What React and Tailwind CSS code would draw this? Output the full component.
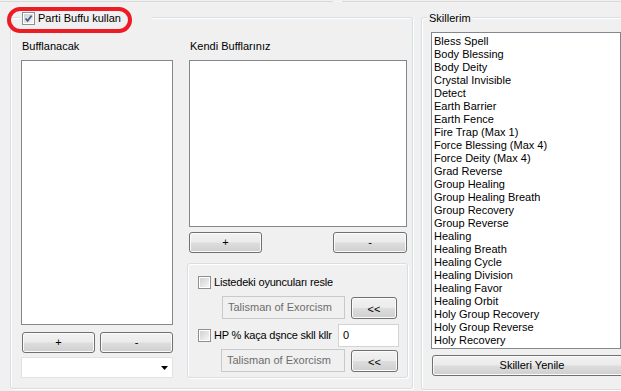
import React from "react";

const Btn = ({ className = "", children }) => (
  <div
    className={
      "flex items-center justify-center border border-[#707070] rounded-[3px] bg-[linear-gradient(#f2f2f2_0%,#ebebeb_48%,#dddddd_52%,#cfcfcf_100%)] shadow-[inset_0_0_0_1px_#fbfbfb] text-black shrink-0 " +
      className
    }
  >
    {children}
  </div>
);

const Check = ({ checked }) => (
  <div className="w-[13px] h-[13px] border border-[#8e8f8f] bg-white p-px shrink-0">
    <div className="w-full h-full bg-[linear-gradient(135deg,#cfd1d4,#f5f5f5)] flex items-center justify-center">
      {checked && (
        <svg width="9" height="9" viewBox="0 0 9 9">
          <path d="M1.5 4.5 L3.6 6.8 L7.6 1.6" fill="none" stroke="#4a5e8c" strokeWidth="1.8" />
        </svg>
      )}
    </div>
  </div>
);

const ListBox = ({ className = "", children }) => (
  <div className={"border border-[#828790] bg-white overflow-hidden shrink-0 " + className}>{children}</div>
);

const skills = [
  "Bless Spell",
  "Body Blessing",
  "Body Deity",
  "Crystal Invisible",
  "Detect",
  "Earth Barrier",
  "Earth Fence",
  "Fire Trap (Max 1)",
  "Force Blessing (Max 4)",
  "Force Deity (Max 4)",
  "Grad Reverse",
  "Group Healing",
  "Group Healing Breath",
  "Group Recovery",
  "Group Reverse",
  "Healing",
  "Healing Breath",
  "Healing Cycle",
  "Healing Division",
  "Healing Favor",
  "Healing Orbit",
  "Holy Group Recovery",
  "Holy Group Reverse",
  "Holy Recovery",
];

export default function App() {
  return (
    <div className="w-[621px] h-[391px] bg-[#f0f0f0] relative overflow-hidden text-[11px] leading-[13px] text-black font-['Liberation_Sans',Arial,sans-serif]">
      {/* top tab edge */}
      <div className="mt-px h-px bg-[#d9d9d9] flex">
        <div className="ml-[333px] w-[9px] bg-[#f7f7f7]" />
      </div>

      <div className="flex pl-[10px] pt-[15px]">
        {/* Left group */}
        <div className="relative shrink-0 w-[403px] h-[372px] border border-[#d5dfe5] rounded-[3px] shadow-[inset_1px_1px_0_#ffffff,1px_1px_0_#ffffff]">
          <div className="absolute left-[9px] -top-[7px] w-[132px] h-[14px] bg-[#f0f0f0] flex items-center pl-[2px] gap-[3px]">
            <Check checked />
            <span className="whitespace-nowrap">Parti Buffu kullan</span>
          </div>

          <div className="flex pl-[10px] pt-[22px]">
            {/* column 1 */}
            <div className="w-[152px] shrink-0 flex flex-col">
              <div className="h-[20px] pl-px">Bufflanacak</div>
              <ListBox className="h-[265px]" />
              <div className="flex justify-between pl-px mt-[7px]">
                <Btn className="w-[73px] h-[21px]">+</Btn>
                <Btn className="w-[73px] h-[21px]">-</Btn>
              </div>
              <div className="mt-[4px] h-[21px] border border-[#e2e2e2] bg-white flex items-center justify-end pr-[4px]">
                <svg width="7" height="4" viewBox="0 0 7 4">
                  <path d="M0 0 H7 L3.5 4 Z" fill="#000" />
                </svg>
              </div>
            </div>

            {/* column 2 */}
            <div className="ml-[16px] w-[218px] shrink-0 flex flex-col">
              <div className="h-[20px] pl-px">Kendi Bufflarınız</div>
              <ListBox className="h-[167px]" />
              <div className="flex justify-between mt-[5px]">
                <Btn className="w-[73px] h-[21px]">+</Btn>
                <Btn className="w-[74px] h-[21px]">-</Btn>
              </div>

              <div className="mt-[10px] -ml-[2px] w-[221px] h-[115px] border border-[#d5dfe5] rounded-[3px] shadow-[inset_1px_1px_0_#ffffff,1px_1px_0_#ffffff] pl-[10px] pt-[12px] flex flex-col">
                <div className="flex items-center gap-[3px] w-[136px] overflow-hidden whitespace-nowrap h-[13px] tracking-[-0.2px]">
                  <Check />
                  <span>Listedeki oyuncuları resle</span>
                </div>
                <div className="flex items-start mt-[7px] ml-[24px]">
                  <div className="w-[123px] h-[23px] border border-[#c9c9c9] bg-[#f0f0f0] text-[#6d6d6d] flex items-center pl-[5px] whitespace-nowrap">
                    Talisman of Exorcism
                  </div>
                  <Btn className="ml-[6px] mt-px w-[46px] h-[22px] pt-[2px]">&lt;&lt;</Btn>
                </div>
                <div className="flex items-center mt-[5px] h-[23px]">
                  <div className="flex items-center gap-[3px] w-[136px] overflow-hidden whitespace-nowrap tracking-[-0.2px]">
                    <Check />
                    <span>HP % kaça dşnce skll kllr</span>
                  </div>
                  <div className="ml-[4px] w-[61px] h-[23px] border border-[#d3d3d3] bg-white flex items-center pl-[4px]">
                    0
                  </div>
                </div>
                <div className="flex items-start mt-[2px] ml-[23px]">
                  <div className="w-[124px] h-[23px] border border-[#c9c9c9] bg-[#f0f0f0] text-[#6d6d6d] flex items-center pl-[5px] whitespace-nowrap">
                    Talisman of Exorcism
                  </div>
                  <Btn className="ml-[6px] mt-px w-[47px] h-[22px] pt-[2px]">&lt;&lt;</Btn>
                </div>
              </div>
            </div>
          </div>
        </div>

        {/* Right group */}
        <div className="relative ml-[8px] w-[212px] h-[373px] shrink-0 border border-[#d5dfe5] rounded-[3px] shadow-[inset_1px_1px_0_#ffffff,1px_1px_0_#ffffff]">
          <div className="absolute left-[5px] -top-[7px] h-[14px] px-[2px] bg-[#f0f0f0] flex items-center">
            Skillerim
          </div>
          <div className="pl-[9px] pt-[14px] flex flex-col">
            <ListBox className="w-[190px] h-[317px] pl-[2px] pt-[2px]">
              {skills.map((s) => (
                <div key={s} className="h-[13px] whitespace-nowrap">
                  {s}
                </div>
              ))}
            </ListBox>
            <Btn className="mt-[6px] ml-px w-[200px] h-[21px]">Skilleri Yenile</Btn>
          </div>
        </div>
      </div>

      {/* red highlight */}
      <div className="absolute left-[7px] top-[7px] w-[125px] h-[26px] border-[4px] border-[#ed1c24] rounded-[13px]" />
    </div>
  );
}
